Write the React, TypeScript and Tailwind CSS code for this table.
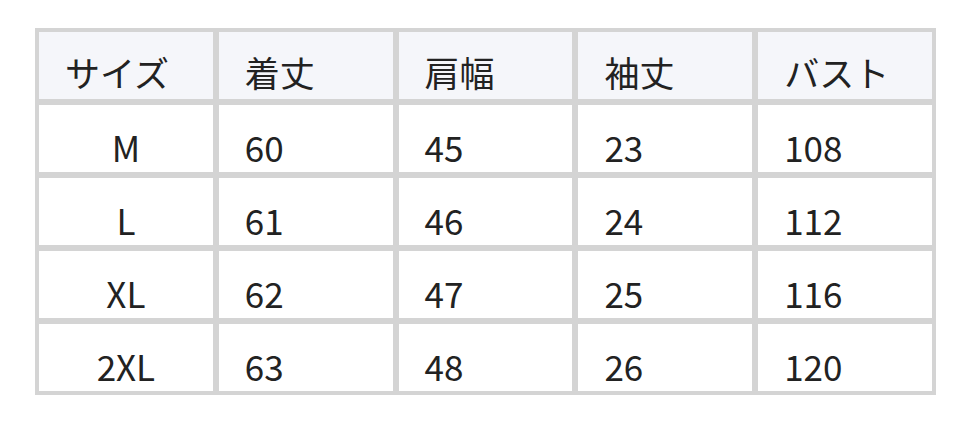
const headers = ['サイズ', '着丈', '肩幅', '袖丈', 'バスト'];

const rows = [
  ['M', '60', '45', '23', '108'],
  ['L', '61', '46', '24', '112'],
  ['XL', '62', '47', '25', '116'],
  ['2XL', '63', '48', '26', '120'],
];

export default function App() {
  return (
    <div className="w-[972px] h-[422px] bg-white pt-[28px] pl-[35px]">
      <div
        className="w-[901px] grid grid-cols-5 gap-[6px] p-[4px] bg-[#d4d4d4] text-[#222222] text-[35px]"
        style={{ fontFamily: '"Noto Sans CJK JP", "Noto Sans", sans-serif' }}
      >
        {headers.map((h) => (
          <div key={h} className="h-[67px] bg-[#f5f6fa] flex items-end pl-[26px] pb-[4px] leading-[46px]">
            {h}
          </div>
        ))}
        {rows.map((r) =>
          r.map((c, i) => (
            <div
              key={r[0] + i}
              className={`h-[67px] bg-white flex items-end pb-[2px] leading-[46px] ${
                i === 0 ? 'justify-center' : 'pl-[26px]'
              }`}
            >
              {c}
            </div>
          ))
        )}
      </div>
    </div>
  );
}
